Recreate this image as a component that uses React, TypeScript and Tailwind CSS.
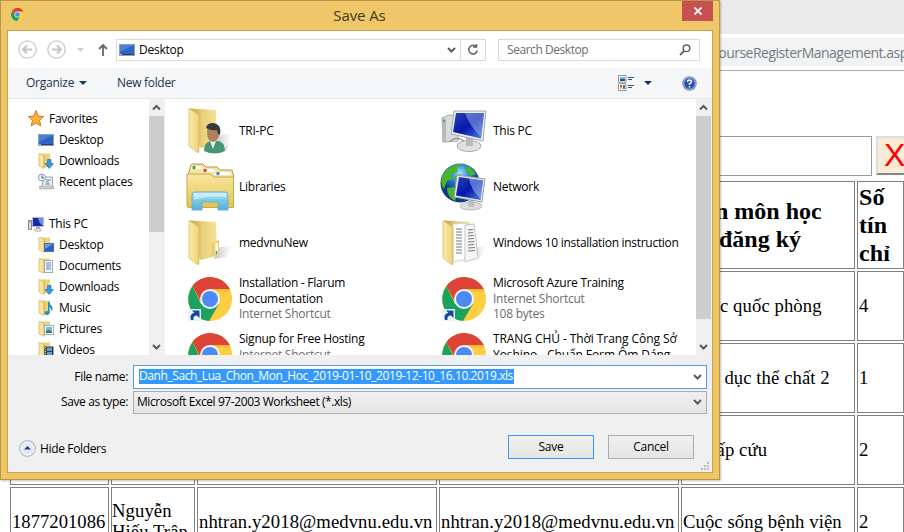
import React from "react";

const ui = "font-['Open_Sans','Noto_Sans',sans-serif]";
const serif = "font-['Liberation_Serif','Times_New_Roman',serif]";

function ChromeIcon({ size, shortcut = false }: { size: number; shortcut?: boolean }) {
  return (
    <svg width={size} height={size} viewBox="0 0 44 44" className="block shrink-0">
      <circle cx="22" cy="22" r="22" fill="#ffcd40" />
      <path d="M22 22L5 8.500A22 22 0 0 1 41.600 12H22Z" fill="#db4437" />
      <path d="M22 22L31 27L21 44A22 22 0 0 1 4.500 9L13 27Z" fill="#1aa260" />
      <path d="M4.500 9L13 25V22L22 12H41.600A22 22 0 0 0 4.500 9Z" fill="#db4437" />
      <path d="M22 12H41.600L42.500 14.500L24 13.500Z" fill="#e8a820" opacity=".5" />
      <circle cx="22" cy="22" r="10" fill="#f4f4f4" />
      <circle cx="22" cy="22" r="8" fill="#4c8bf5" />
      {shortcut && (
        <g>
          <rect x="0" y="32" width="13" height="13" fill="#e8f3fa" />
          <path d="M3 43C1.500 38 4 36 6.500 36L4 33.500H11.500V41L9 38.500C6 38.500 5 40 5.500 43Z" fill="#17479a" />
        </g>
      )}
    </svg>
  );
}

function Folder({ kind }: { kind: "user" | "plain" | "docs" }) {
  return (
    <svg width="48" height="48" viewBox="0 0 48 48" className="block shrink-0">
      <defs>
        <linearGradient id="fold" x1="0" x2="1">
          <stop offset="0" stopColor="#fbeca8" />
          <stop offset="1" stopColor="#ecd077" />
        </linearGradient>
        <linearGradient id="foldBack" x1="0" x2="1">
          <stop offset="0" stopColor="#c39d45" />
          <stop offset=".45" stopColor="#e8cf7a" />
          <stop offset="1" stopColor="#f5e394" />
        </linearGradient>
        <linearGradient id="foldShade" x1="0" x2="1">
          <stop offset="0" stopColor="#888" stopOpacity=".55" />
          <stop offset="1" stopColor="#bbb" stopOpacity="0" />
        </linearGradient>
      </defs>
      <path d="M28 40L34 28L47 27L40 38Z" fill="url(#foldShade)" />
      <path d="M4 1.500L30 3L31 37L14 41Z" fill="url(#foldBack)" />
      {kind === "docs" && (
        <g>
          <path d="M13 5L26 4L28 40L13 43Z" fill="#fff" stroke="#cfcfcf" />
          <path d="M25 6L34 5L38 39L25 43Z" fill="#f6f6f6" stroke="#c4c4c4" />
          <path d="M16 10h6M16 13h6M16 16h6M16 19h6M16 22h6M16 25h6M16 28h6M16 31h6M16 34h6M28 11l5-.5M28 14l5-.5M28 17l6-.5M28 20l6-.5M28 23l6-.5M28 26l6-.5M28 29l7-.5M28 32l7-.5" stroke="#777" strokeWidth="1.200" />
        </g>
      )}
      {kind === "plain" && (
        <g>
          <path d="M25 24L33 21V37L25 38Z" fill="#edd071" />
          <path d="M30.500 24V36" stroke="#fff" strokeWidth="2.200" />
          <path d="M30.500 32V35.500" stroke="#3b93df" strokeWidth="1.500" />
        </g>
      )}
      <path d="M3 1.500L13 8V44Q13 46.500 10.500 45L3 39Z" fill="url(#fold)" stroke="#d6b75c" strokeWidth=".7" />
      {kind === "user" && (
        <g>
          <path d="M36 44L43 35L41 43Z" fill="#bbb" opacity=".5" />
          <path d="M18 44Q18 36 24 34H33Q39 36 39 44Q29 49 18 44Z" fill="#469577" />
          <path d="M24 34L27 42L30 34Z" fill="#e6f3ed" />
          <path d="M21 24Q21 35 27 35Q33 34 34 25L32 20H22Z" fill="#ad8060" />
          <path d="M20 21Q21 16 27 16Q36 17 34 28Q31 27 31 23Q25 24 20 21Z" fill="#373b40" />
        </g>
      )}
    </svg>
  );
}

function Libraries() {
  return (
    <svg width="48" height="48" viewBox="0 0 48 48" className="block shrink-0">
      <defs>
        <linearGradient id="lib" x2="0" y2="1">
          <stop stopColor="#f8e7a2" />
          <stop offset="1" stopColor="#e7c34e" />
        </linearGradient>
        <linearGradient id="libBlue" x2="0" y2="1">
          <stop stopColor="#b8e8f8" />
          <stop offset=".5" stopColor="#78c8e8" />
          <stop offset="1" stopColor="#58acd9" />
        </linearGradient>
      </defs>
      <path d="M1.500 14L5 2Q5.500 1 7 1H17L20 4H31L34 7H46L47.500 12V44H1.500Z" fill="#f6e4a1" stroke="#b99745" />
      <path d="M6 3H14L17 6H5ZM17 6H27L30 9H16ZM30 9H44L45 12H28Z" fill="#fff" />
      <path d="M6.500 3h3v3h-3z" fill="#38a847" />
      <path d="M17.500 6h3v3h-3z" fill="#df3d25" />
      <path d="M30.500 9h3v3h-3z" fill="#3688db" />
      <path d="M1 11H24L28 14H47.500V43Q47.500 44.500 46 44.500H3Q1 44.500 1 42Z" fill="url(#lib)" stroke="#c9a74d" />
      <path d="M9 29H39Q42 29 42 32V47H32V39H16V47H6V32Q6 29 9 29Z" fill="url(#libBlue)" stroke="#69b3d2" />
      <path d="M8 30H40V34Q22 32 8 37Z" fill="#dcf5fd" opacity=".65" />
    </svg>
  );
}

function Monitor({ network = false }: { network?: boolean }) {
  return (
    <svg width="48" height="48" viewBox="0 0 48 48" className="block shrink-0">
      <defs>
        <linearGradient id="screen" x2="1" y2="1">
          <stop stopColor="#2448b5" />
          <stop offset=".5" stopColor="#0716a8" />
          <stop offset="1" stopColor="#5084e4" />
        </linearGradient>
        <radialGradient id="globe" cx=".5" cy=".25">
          <stop stopColor="#a7e4ff" />
          <stop offset=".5" stopColor="#2882ce" />
          <stop offset="1" stopColor="#123984" />
        </radialGradient>
      </defs>
      {network ? (
        <g>
          <circle cx="20" cy="20" r="19.500" fill="url(#globe)" />
          <path d="M3 11Q10 1 21 1Q15 6 18 9L11 11L13 16L7 18L4 26Q-1 20 3 11ZM7 25L14 24L18 29L15 38Q7 34 7 25ZM24 4L30 4L36 11L31 13L27 9ZM15 13L21 11L19 17L15 19Z" fill="#47b52d" />
          <ellipse cx="31" cy="43" rx="11" ry="4" fill="#ddd" stroke="#bbb" />
          <path d="M28 36L34 38V44H28Z" fill="#bcc0c4" />
          <path d="M17 12L45 16L42 39L14 34Z" fill="#e7eaed" stroke="#9a9ea3" />
          <path d="M19 14L43 17.500L40.500 37L16 32.500Z" fill="url(#screen)" />
          <path d="M29 15.500L43 17.500L40.500 36Q31 27 29 15.500Z" fill="#9cbcf2" opacity=".55" />
        </g>
      ) : (
        <g>
          <path d="M2 11L9 8L18 9V34L3 35Z" fill="#d9dbdd" stroke="#aaa" />
          <path d="M2 11L6 12V36L2 34Z" fill="#b7babd" />
          <path d="M3 14h2" stroke="#35c52e" strokeWidth="2" />
          <path d="M9 35Q16 28 24 34" stroke="#777" fill="none" />
          <ellipse cx="29" cy="39" rx="12" ry="5.500" fill="#dfe1e3" stroke="#aaa" />
          <path d="M26 28L33 30V39H26Z" fill="#b7babe" />
          <path d="M14 4L46 4L43 34L11 27Z" fill="#edf0f2" stroke="#a4a7ab" />
          <path d="M16 6L44 6L41 31.500L13 25Z" fill="url(#screen)" />
          <path d="M25 6L44 6L41 30Q30 20 25 6Z" fill="#9cb9ee" opacity=".5" />
        </g>
      )}
    </svg>
  );
}

function DesktopIcon() {
  return (
    <svg width="16" height="14" viewBox="0 0 16 14" className="block shrink-0">
      <rect x=".5" y="1.500" width="15" height="11" fill="#2f66c4" stroke="#8aa0bc" />
      <path d="M1 2H15L1 9Z" fill="#4a7fd2" />
      <path d="M1 11.500H15" stroke="#253b66" />
      <path d="M1 11.500H3" stroke="#8ed16e" />
    </svg>
  );
}

type Mini = "star" | "desktop" | "down" | "recent" | "pc" | "fdesk" | "doc" | "music" | "pic" | "video";

function MiniIcon({ kind }: { kind: Mini }) {
  if (kind === "desktop") return <DesktopIcon />;
  return (
    <svg width="16" height="16" viewBox="0 0 16 16" className="block shrink-0 overflow-visible">
      {kind === "star" && (
        <path d="M8 -.5L10.200 5L15.800 5.500L11.500 9.300L12.800 15L8 12L3.200 15L4.500 9.300L.2 5.500L5.800 5Z" fill="#fbb335" stroke="#dd7427" />
      )}
      {kind === "recent" && (
        <g>
          <path d="M6 3H14.500V12.500H4Z" fill="#eef1f5" stroke="#9aa1aa" />
          <path d="M8 6h5M8 8h3M7 10h5" stroke="#5583b5" />
          <path d="M1.500 12H15.500V15H1.500Z" fill="#c9ccd0" stroke="#999" strokeWidth=".5" />
          <circle cx="4" cy="3.500" r="3.500" fill="#eef4f8" stroke="#8d9aa6" />
          <path d="M4 1.500V4H6" stroke="#555" fill="none" />
        </g>
      )}
      {kind === "pc" && (
        <g>
          <path d="M.5 4.500H3.500V13.500H.5Z" fill="#ddd" stroke="#888" />
          <path d="M1.500 6H3" stroke="#38a92a" />
          <path d="M8 10H12V14H8Z" fill="#aaa" />
          <ellipse cx="10" cy="14" rx="4" ry="1.500" fill="#ddd" stroke="#aaa" strokeWidth=".5" />
          <rect x="4.500" y="1.500" width="11" height="9" fill="#1427ae" stroke="#b9bcc0" />
          <path d="M10 2H15V10Q11 7 10 2Z" fill="#6b91e6" />
        </g>
      )}
      {kind !== "star" && kind !== "recent" && kind !== "pc" && (
        <g>
          <path d="M2 .5H12V14H5Z" fill="#ecd27a" />
          <path d="M1 .5L6 2.500V15.500L1 13Z" fill="#f8e3a0" stroke="#d7b655" strokeWidth=".7" />
          <path d="M6.300 2.500V15" stroke="#cfae55" strokeWidth=".8" />
        </g>
      )}
      {kind === "down" && <path d="M9.500 6.500H13V10.500H15.500L11.200 15.500L7 10.500H9.500Z" fill="#2f9be8" stroke="#2273b8" strokeWidth=".7" />}
      {kind === "fdesk" && (
        <g>
          <rect x="6.500" y="6.500" width="9" height="8" fill="#2d5fc0" stroke="#4c6fa8" />
          <path d="M7 7H15L7 12Z" fill="#6d9ce5" />
        </g>
      )}
      {kind === "doc" && (
        <g>
          <rect x="6.500" y="2.500" width="8" height="12" fill="#f7fafc" stroke="#9fabb6" />
          <path d="M8 5h5M8 7h5M8 9h5M8 11h5" stroke="#5881b2" />
        </g>
      )}
      {kind === "music" && (
        <g fill="#2789d5">
          <ellipse cx="9" cy="13" rx="2.500" ry="2" />
          <path d="M10 2H11.500Q12 5 14 6Q15.500 9 13.500 12Q13.500 8 11.500 7V13H10Z" />
        </g>
      )}
      {kind === "pic" && (
        <g>
          <rect x="6.500" y="4.500" width="9" height="9" fill="#fff" stroke="#9eabb4" />
          <path d="M8 6H14V12H8Z" fill="#6cb8df" />
          <path d="M8 10L11 9L14 11V12H8Z" fill="#387654" />
        </g>
      )}
      {kind === "video" && (
        <g>
          <rect x="6.500" y="4.500" width="9" height="11" fill="#353d43" />
          <path d="M9 5.500H14V9H9ZM9 10H14V14H9Z" fill="#5c9fd0" />
          <path d="M7.700 5V15" stroke="#ddd" strokeDasharray="1 1" />
        </g>
      )}
    </svg>
  );
}

function Chevron({ up = false }: { up?: boolean }) {
  return (
    <svg width="9" height="8" viewBox="0 0 9 8" className="block">
      <path d={up ? "M1 5.500L4.500 2L8 5.500" : "M1 2L4.500 5.500L8 2"} fill="none" stroke="#5a5a5a" strokeWidth="2" />
    </svg>
  );
}

function Scrollbar({ thumb }: { thumb: string }) {
  return (
    <div className="flex w-4 shrink-0 flex-col bg-[#f0f0f0]">
      <div className="flex h-[17px] shrink-0 items-center pl-[3px]"><Chevron up /></div>
      <div className={`w-[15px] bg-[#cdcdcd] ${thumb}`} />
      <div className="mt-auto flex h-[17px] items-center pl-[3px]"><Chevron /></div>
    </div>
  );
}

const tree: { label: string; kind: Mini; root?: boolean; gap?: boolean }[] = [
  { label: "Favorites", kind: "star", root: true },
  { label: "Desktop", kind: "desktop" },
  { label: "Downloads", kind: "down" },
  { label: "Recent places", kind: "recent" },
  { label: "This PC", kind: "pc", root: true, gap: true },
  { label: "Desktop", kind: "fdesk" },
  { label: "Documents", kind: "doc" },
  { label: "Downloads", kind: "down" },
  { label: "Music", kind: "music" },
  { label: "Pictures", kind: "pic" },
  { label: "Videos", kind: "video" },
];

const shortcutIcon = <div className="pt-[2px] pl-0.5"><ChromeIcon size={44} shortcut /></div>;

const files: { icon: React.ReactNode; lines: string[]; meta?: string[]; spacing?: string }[] = [
  { icon: <Folder kind="user" />, lines: ["TRI-PC"] },
  { icon: <Monitor />, lines: ["This PC"] },
  { icon: <Libraries />, lines: ["Libraries"] },
  { icon: <Monitor network />, lines: ["Network"] },
  { icon: <Folder kind="plain" />, lines: ["medvnuNew"] },
  { icon: <Folder kind="docs" />, lines: ["Windows 10 installation instruction"], spacing: "tracking-[-0.3px]" },
  { icon: shortcutIcon, lines: ["Installation - Flarum", "Documentation"], meta: ["Internet Shortcut"] },
  { icon: shortcutIcon, lines: ["Microsoft Azure Training"], meta: ["Internet Shortcut", "108 bytes"] },
  { icon: shortcutIcon, lines: ["Signup for Free Hosting"], meta: ["Internet Shortcut"] },
  { icon: shortcutIcon, lines: ["TRANG CHỦ - Thời Trang Công Sở", "Yoshino - Chuẩn Form Ôm Dáng"], spacing: "tracking-[-0.08px]" },
];

function SaveDialog() {
  return (
    <div className={`absolute top-0 left-0 flex h-[480px] w-[720px] flex-col border border-[#b8974b] bg-[#efc768] px-1.5 pb-1.5 text-[12px] tracking-[-0.25px] text-black shadow-[1px_1px_2px_rgba(0,0,0,.25)] ${ui}`}>
      <div className="flex h-[29px] shrink-0 items-start">
        <div className="w-[30px] pt-[7px] pl-1"><ChromeIcon size={13} /></div>
        <div className="flex-1 pt-[4px] text-center text-[15px] leading-[20px] tracking-[-0.1px] text-[#41391f]">Save As</div>
        <div className="flex h-5 w-[31px] items-center justify-center bg-[#c75050]">
          <svg width="8" height="8" viewBox="0 0 8 8"><path d="M.5 .5L7.500 7.500M7.500 .5L.5 7.500" stroke="#fff" strokeWidth="1.800" /></svg>
        </div>
      </div>
      <div className="flex min-h-0 flex-1 flex-col border border-[#c9a550] bg-white">
        <div className="flex h-[37px] shrink-0 items-center pl-[10px]">
          {[false, true].map((fwd) => (
            <svg key={String(fwd)} width="19" height="19" viewBox="0 0 19 19" className="mr-[10px] shrink-0">
              <circle cx="9.500" cy="9.500" r="8.700" fill="#fff" stroke="#cacaca" strokeWidth="1.300" />
              <path d={fwd ? "M5 9.500H13.500M10 5.500L14 9.500L10 13.500" : "M14 9.500H5.500M9 5.500L5 9.500L9 13.500"} fill="none" stroke="#c4c4c4" strokeWidth="2" />
            </svg>
          ))}
          <svg width="7" height="4" className="ml-px shrink-0"><path d="M0 0H7L3.500 4Z" fill="#cfcfcf" /></svg>
          <svg width="10" height="14" viewBox="0 0 10 14" className="ml-[14px] shrink-0"><path d="M5 13V2M1 6L5 2L9 6" fill="none" stroke="#666" strokeWidth="1.800" /></svg>
          <div className="ml-[8px] flex h-[22px] w-[370px] shrink-0 items-center border border-[#d9d9d9] pl-[2px]">
            <DesktopIcon />
            <span className="ml-[4px] flex-1">Desktop</span>
            <div className="mr-[4px]"><Chevron /></div>
            <div className="flex h-full w-[25px] items-center justify-center border-l border-[#d9d9d9]">
              <svg width="12" height="12" viewBox="0 0 12 12"><path d="M9.500 3A4.300 4.300 0 1 0 10.300 6.500M6 3H9.500V0" fill="none" stroke="#666" strokeWidth="1.500" /></svg>
            </div>
          </div>
          <div className="ml-[12px] flex h-[22px] w-[202px] shrink-0 items-center justify-between border border-[#d9d9d9] pr-[8px] pl-[8px] text-[#6d6d6d]">
            <span className="tracking-[-0.45px]">Search Desktop</span>
            <svg width="12" height="12" viewBox="0 0 12 12"><circle cx="7.500" cy="4.300" r="3.300" fill="none" stroke="#666" strokeWidth="1.500" /><path d="M5 7L1 11" stroke="#666" strokeWidth="2" /></svg>
          </div>
        </div>
        <div className="flex h-[31px] shrink-0 items-center border-b border-[#e6e7e8] bg-[#f5f6f7] pl-[18px] text-[#1e3250]">
          <span className="w-[53px] tracking-[-0.25px]">Organize</span>
          <svg width="8" height="4"><path d="M0 0H8L4 4Z" fill="#1e395b" /></svg>
          <span className="ml-[30px] tracking-[-0.3px]">New folder</span>
          <div className="ml-auto flex items-center pr-[15px]">
            <svg width="17" height="16" viewBox="0 0 17 16">
              <path d="M.5 .5H8V7H.5ZM.5 8.500H8V15.500H.5Z" fill="#fff" stroke="#8993a0" />
              <path d="M2 2H7V5H2Z" fill="#73b7df" /><path d="M2 4H7V6H2Z" fill="#28547e" />
              <path d="M2 10H4V12H2Z" fill="#db402f" /><path d="M5 10H7V12H5Z" fill="#2a73c8" /><path d="M2 12H4V14H2Z" fill="#eebd2d" /><path d="M5 12H7V14H5Z" fill="#3b9b40" />
              <path d="M10 2.500H16M10 4.500H14M10 10.500H16M10 12.500H14" stroke="#405572" />
            </svg>
            <svg width="8" height="4" className="ml-[9px]"><path d="M0 0H8L4 4Z" fill="#162f50" /></svg>
            <svg width="15" height="15" viewBox="0 0 15 15" className="ml-[30px]">
              <circle cx="7.500" cy="7.500" r="6.700" fill="#2450b4" stroke="#8796b0" strokeWidth="1.200" />
              <circle cx="7.500" cy="7.500" r="5.700" fill="none" stroke="#d2dcf1" strokeWidth=".7" />
              <path d="M5.500 6Q5.500 4 7.700 4Q9.700 4 9.500 5.700Q9.300 7 7.500 7.700V9M7.500 10V11.500" stroke="#fff" strokeWidth="1.500" fill="none" />
            </svg>
          </div>
        </div>
        <div className="flex h-[256px] shrink-0 overflow-hidden">
          <div className="w-[141px] shrink-0 pt-[9px]">
            {tree.map((n, i) => (
              <div key={i} className={`flex h-[21px] items-center ${n.root ? "pl-5" : "pl-[30px]"} ${n.gap ? "mt-[21px]" : ""}`}>
                <MiniIcon kind={n.kind} />
                <span className={n.root ? "ml-[5px]" : "ml-[5px]"}>{n.label}</span>
              </div>
            ))}
          </div>
          <Scrollbar thumb="h-[116px]" />
          <div className="grid flex-1 auto-rows-[56px] grid-cols-[254px_256px] pt-1 pl-[21px]">
            {files.map((f, i) => (
              <div key={i} className={`flex h-[56px] ${f.lines.length + (f.meta?.length ?? 0) > 1 ? "items-start" : "items-center"}`}>
                <div className={`h-12 w-12 shrink-0 ${f.lines.length + (f.meta?.length ?? 0) > 1 ? "mt-1" : ""}`}>{f.icon}</div>
                <div className={`ml-[5px] leading-[15.500px] whitespace-nowrap ${f.lines.length + (f.meta?.length ?? 0) > 1 ? "mt-[4px]" : ""} ${f.spacing ?? ""}`}>
                  {f.lines.map((l) => <div key={l}>{l}</div>)}
                  {f.meta?.map((l) => <div key={l} className="text-[#6d6d6d]">{l}</div>)}
                </div>
              </div>
            ))}
          </div>
          <Scrollbar thumb="h-[203px]" />
        </div>
        <div className="flex-1 bg-[#f0f0f0] pt-[10px]">
          <div className="flex h-[24px] items-center">
            <span className="w-[125px] pr-[5px] text-right tracking-[-0.35px]">File name:</span>
            <div className="flex h-[24px] w-[574px] items-center justify-between border border-[#569de5] bg-white pr-[4px] pl-[5px]">
              <span className="mb-[2px] h-[15px] w-[375px] bg-[#3399ff] leading-[14px] tracking-[-0.415px] whitespace-nowrap text-white">Danh_Sach_Lua_Chon_Mon_Hoc_2019-01-10_2019-12-10_16.10.2019.xls</span>
              <Chevron />
            </div>
          </div>
          <div className="mt-px flex h-[24px] items-center">
            <span className="w-[125px] pr-[5px] text-right tracking-[-0.4px]">Save as type:</span>
            <div className="flex h-[23px] w-[574px] items-center justify-between border border-[#acacac] bg-linear-to-b from-[#f0f0f0] to-[#e5e5e5] pr-[4px] pl-[3px]">
              <span className="tracking-[-0.42px]">Microsoft Excel 97-2003 Worksheet (*.xls)</span>
              <Chevron />
            </div>
          </div>
          <div className="mt-[20px] flex h-[25px] items-center pl-[11px]">
            <svg width="17" height="17" viewBox="0 0 17 17" className="mt-[3px]">
              <circle cx="8.500" cy="8.500" r="7.800" fill="#e4e9f3" stroke="#9ba5b8" />
              <circle cx="8.500" cy="8.500" r="6.500" fill="none" stroke="#fff" />
              <path d="M5 9.500L8.500 6L12 9.500Z" fill="#273f7f" />
            </svg>
            <span className="mt-[5px] ml-[4px] flex-1 tracking-[-0.35px]">Hide Folders</span>
            <div className="flex h-[24px] w-[86px] items-center justify-center border border-[#3399ff] bg-linear-to-b from-[#f0f0f0] to-[#e5e5e5]">Save</div>
            <div className="mr-[18px] ml-[14px] flex h-[24px] w-[86px] items-center justify-center border border-[#acacac] bg-linear-to-b from-[#f0f0f0] to-[#e5e5e5]">Cancel</div>
          </div>
          <svg width="8" height="8" className="mt-[3px] mr-[3px] ml-auto block" fill="#bdbdbd">
            <path d="M6 0h2v2H6zM3 3h2v2H3zM6 3h2v2H6zM0 6h2v2H0zM3 6h2v2H3zM6 6h2v2H6z" />
          </svg>
        </div>
      </div>
    </div>
  );
}

const courses = [
  { name: "c quốc phòng", credits: "4", pad: "pl-[38px]" },
  { name: "Giáo dục thể chất 2", credits: "1", pad: "pl-px" },
  { name: "Sơ cấp cứu", credits: "2", pad: "pl-px" },
  { name: "Cuộc sống bệnh viện", credits: "2", pad: "pl-px" },
];

const cell = "flex items-center border border-[#808080] overflow-hidden";

export default function App() {
  return (
    <div className="relative h-[532px] w-[904px] overflow-hidden bg-white">
      <div className="h-[34px] bg-[#ebebeb]" />
      <div className={`h-[37px] border-b border-[#b0b0b0] bg-white pt-1 ${ui}`}>
        <div className="h-[28px] bg-[#f1f3f4] pl-[710px] text-[14px] leading-[29px] tracking-[-0.52px] whitespace-nowrap text-[#777b80]">CourseRegisterManagement.aspx</div>
      </div>
      <div className="mt-[65px] flex h-[40px] gap-[4px] pl-[10px]">
        <div className="w-[862px] shrink-0 border border-[#999]" />
        <div className="h-[39px] w-[43px] shrink-0 border-t-2 border-b-2 border-l-2 border-t-[#ddd] border-b-[#888] border-l-[#ddd] bg-[#faebd7] pl-[6px] font-['Liberation_Sans',Arial,sans-serif] text-[32px] leading-[35px] text-[#f00]">X</div>
      </div>
      <div className={`mt-[5px] ml-[10px] grid w-[894px] grid-cols-[99px_84px_240px_240px_174px_47px] grid-rows-[88px_70px_70px_70px_70px] gap-[2px] text-[18.670px] leading-[21px] tracking-[0.09px] text-black ${serif}`}>
        {[0, 1, 2, 3].map((i) => <div key={i} className={cell} />)}
        <div className={`${cell} justify-center pr-[16px] text-center text-[24px] leading-[28px] font-bold tracking-normal`}>
          <div><span className="mr-[10px]">Tên môn học</span><br />đăng ký</div>
        </div>
        <div className={`${cell} pl-px text-[24px] leading-[28px] font-bold`}>Số<br />tín<br />chỉ</div>
        {courses.map((c, i) => {
          const last = i === 3;
          return (
            <React.Fragment key={c.name}>
              <div className={`${cell} pb-[2px] pl-px tracking-normal`}>{last && "1877201086"}</div>
              <div className={`${cell} pb-[2px]`}>{last && <span>Nguyễn<br />Hiếu Trân</span>}</div>
              <div className={`${cell} pb-[2px] pl-px`}>{last && "nhtran.y2018@medvnu.edu.vn"}</div>
              <div className={`${cell} pb-[2px] pl-px`}>{last && "nhtran.y2018@medvnu.edu.vn"}</div>
              <div className={`${cell} pb-[2px] whitespace-nowrap ${c.pad}`}>{c.name}</div>
              <div className={`${cell} pb-[2px] pl-px`}>{c.credits}</div>
            </React.Fragment>
          );
        })}
      </div>
      <SaveDialog />
    </div>
  );
}
